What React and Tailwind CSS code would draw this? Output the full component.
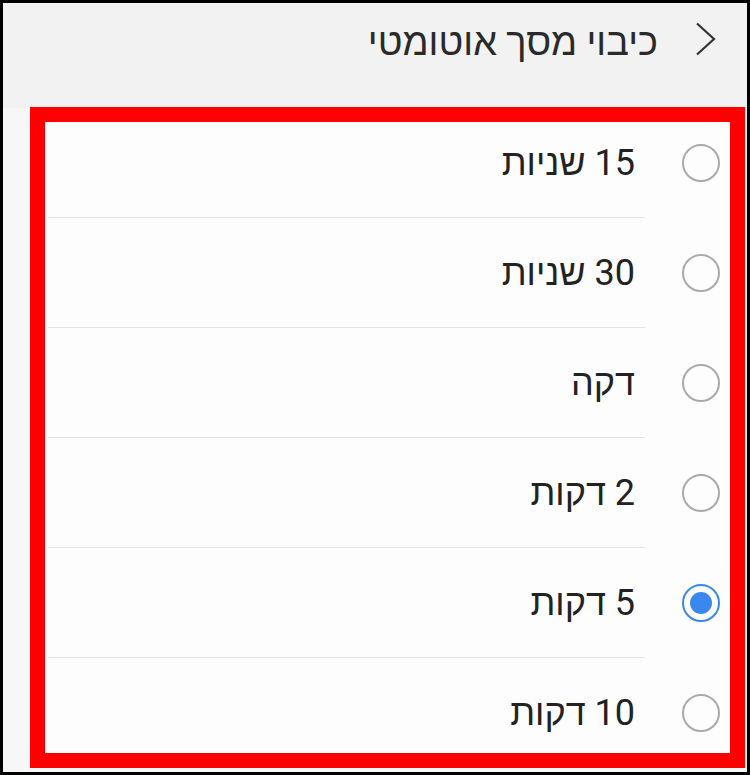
const options = [
  { label: '15 שניות', checked: false },
  { label: '30 שניות', checked: false },
  { label: 'דקה', checked: false },
  { label: '2 דקות', checked: false },
  { label: '5 דקות', checked: true },
  { label: '10 דקות', checked: false },
];

function Radio({ checked }) {
  if (checked) {
    return (
      <span className="flex h-[38px] w-[38px] shrink-0 items-center justify-center rounded-full border-2 border-[#3b87f0]">
        <span className="h-[22px] w-[22px] rounded-full bg-[#3b87f0]" />
      </span>
    );
  }
  return <span className="h-[38px] w-[38px] shrink-0 rounded-full border-2 border-[#aaaaaa]" />;
}

export default function App() {
  return (
    <div
      dir="rtl"
      className="relative h-[775px] w-[750px] overflow-hidden border-[3px] border-black bg-[#f7f7f7]"
      style={{ fontFamily: "Roboto, 'Liberation Sans', 'DejaVu Sans', sans-serif" }}
    >
      {/* Header */}
      <div className="flex h-[105px] items-start bg-[#f2f2f2] pt-[19px] pr-[30px]">
        <svg className="h-[34px] w-[22px]" viewBox="0 0 22 34" fill="none" stroke="#333" strokeWidth="2.2">
          <path d="M2 1.5 L19 17 L2 32.5" />
        </svg>
        <span className="mr-[37px] text-[38px] font-light leading-[40px] text-[#2a2a2a]">כיבוי מסך אוטומטי</span>
      </div>

      {/* List */}
      <div className="mr-[3px] ml-[27px] bg-[#fdfdfd]">
        {options.map((o, i) => (
          <div key={i} className="flex h-[110px] items-center pr-[24px]">
            <Radio checked={o.checked} />
            <div className="mr-[37px] ml-[18px] flex h-full flex-1 items-center border-b border-[#e4e4e4] pr-[10px]">
              <span className="text-[36px] leading-none text-[#222]">{o.label}</span>
            </div>
          </div>
        ))}
      </div>

      {/* Red annotation frame */}
      <div className="pointer-events-none absolute left-[27px] top-[104px] h-[661px] w-[715px] border-[15px] border-[#ff0000]" />
    </div>
  );
}
